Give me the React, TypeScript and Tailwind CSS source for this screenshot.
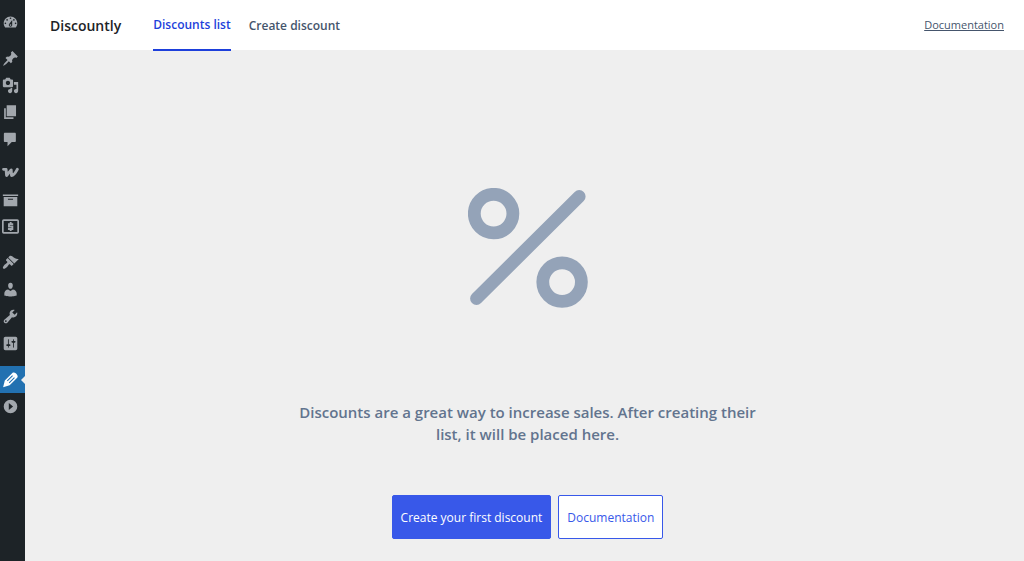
import type { ReactNode } from "react";
import clsx from "clsx";

type MenuItem = { label: string; icon: ReactNode; active?: boolean };

const menu: MenuItem[][] = [
  [
    {
      label: "Dashboard",
      icon: <path d="M3.76 16h12.48c1.1-1.37 1.76-3.11 1.76-5 0-4.42-3.58-8-8-8s-8 3.58-8 8c0 1.89.66 3.63 1.76 5zM10 4c.55 0 1 .45 1 1s-.45 1-1 1-1-.45-1-1 .45-1 1-1zM6 6c.55 0 1 .45 1 1s-.45 1-1 1-1-.45-1-1 .45-1 1-1zm8 0c.55 0 1 .45 1 1s-.45 1-1 1-1-.45-1-1 .45-1 1-1zm-5.37 5.55L12 7v6c0 1.1-.9 2-2 2s-2-.9-2-2c0-.57.24-1.08.63-1.45zM4 10c.55 0 1 .45 1 1s-.45 1-1 1-1-.45-1-1 .45-1 1-1zm12 0c.55 0 1 .45 1 1s-.45 1-1 1-1-.45-1-1 .45-1 1-1zm-5 3c0-.55-.45-1-1-1s-1 .45-1 1 .45 1 1 1 1-.45 1-1z" />,
    },
  ],
  [
    {
      label: "Posts",
      icon: <path d="M10.44 3.02l1.82-1.82 6.36 6.35-1.83 1.82c-1.05-.68-2.48-.57-3.41.36l-.75.75c-.92.93-1.04 2.35-.35 3.41l-1.83 1.82-2.41-2.41-2.8 2.79c-.42.42-3.38 2.71-3.8 2.29s1.86-3.39 2.28-3.81l2.79-2.79L4.1 9.36l1.83-1.82c1.05.69 2.48.57 3.4-.36l.75-.75c.93-.92 1.05-2.35.36-3.41z" />,
    },
    {
      label: "Media",
      icon: <path d="M13 11V4c0-.55-.45-1-1-1h-1.67L9 1H5L3.67 3H2c-.55 0-1 .45-1 1v7c0 .55.45 1 1 1h10c.55 0 1-.45 1-1zM7 4.5c1.38 0 2.5 1.12 2.5 2.5S8.38 9.5 7 9.5 4.5 8.38 4.5 7 5.62 4.5 7 4.5zM14 6h5v10.5c0 1.38-1.12 2.5-2.5 2.5S14 17.88 14 16.5s1.12-2.5 2.5-2.5c.17 0 .34.02.5.05V9h-3V6zm-4 8.05V13h2v3.5c0 1.38-1.12 2.5-2.5 2.5S7 17.88 7 16.5 8.12 14 9.5 14c.17 0 .34.02.5.05z" />,
    },
    { label: "Pages", icon: <path d="M5.500 14.500V1.500h11v13h-11zm-1 1h9v2h-11V5h2v10.500z" /> },
    {
      label: "Comments",
      icon: <path d="M3.500 2h11.500c.8 0 1.300.5 1.300 1.300v8.400c0 .8-.5 1.300-1.300 1.300h-3.500l-5 5v-5h-3c-.8 0-1.300-.5-1.300-1.300V3.300C2.200 2.500 2.700 2 3.500 2z" />,
    },
  ],
  [
    {
      label: "WooCommerce",
      icon: (
        <path
          d="M1.800 6.300h3l.6 7.200L10.800 7l.4 6.500c3.200-.2 5-3.700 6.800-7.200"
          fill="none"
          stroke="currentColor"
          strokeWidth="3.400"
          strokeLinecap="round"
          strokeLinejoin="round"
        />
      ),
    },
    { label: "Products", icon: <path d="M19 4v2H1V4h18zM2 7h16v11H2V7zm11 3.200V9H7v1.200h6z" /> },
    {
      label: "Payments",
      icon: (
        <g fill="none" stroke="currentColor">
          <rect x="1" y="2.500" width="18" height="15" rx="1" strokeWidth="2" />
          <path d="M13.200 7.200H8.200v2.800h4v3H7M10.200 4.800v2.400M10.200 12.900v2.300" strokeWidth="2.200" />
        </g>
      ),
    },
  ],
  [
    {
      label: "Appearance",
      icon: <path d="M14.48 11.06L7.41 3.99l1.5-1.5c.5-.56 2.3-.47 3.51.32 1.21.8 1.43 1.28 2.91 2.1 1.18.64 2.45 1.26 4.45.85zm-.71.71L6.7 4.7 4.93 6.47c-.39.39-.39 1.02 0 1.41l1.06 1.06c.39.39.39 1.03 0 1.42-.6.6-1.43 1.11-2.21 1.69-.35.26-.7.53-1.01.84C1.43 14.23.4 16.08 1.4 17.07c.99 1 2.84-.03 4.18-1.36.31-.31.58-.66.85-1.02.57-.78 1.08-1.61 1.69-2.21.39-.39 1.02-.39 1.41 0l1.06 1.06c.39.39 1.02.39 1.41 0z" />,
    },
    {
      label: "Users",
      icon: <path d="M10 9.25c-2.27 0-2.73-3.44-2.73-3.44C7 4.02 7.82 2 9.97 2c2.16 0 2.98 2.02 2.71 3.81 0 0-.41 3.44-2.68 3.44zm0 2.57L12.72 10c2.39 0 4.52 2.33 4.52 4.53v2.49s-3.65 1.13-7.24 1.13c-3.65 0-7.24-1.13-7.24-1.13v-2.49c0-2.25 1.94-4.48 4.47-4.48z" />,
    },
    {
      label: "Tools",
      icon: <path d="M16.68 9.77c-1.34 1.34-3.3 1.67-4.95.99l-5.41 6.52c-.99.99-2.59.99-3.58 0s-.99-2.59 0-3.57l6.52-5.42c-.68-1.65-.35-3.61.99-4.95 1.28-1.28 3.12-1.62 4.72-1.06l-2.89 2.89 2.82 2.82 2.86-2.87c.53 1.58.18 3.39-1.08 4.65zM3.81 16.21c.4.39 1.04.39 1.43 0 .4-.4.4-1.04 0-1.43-.39-.4-1.03-.4-1.43 0-.39.39-.39 1.03 0 1.43z" />,
    },
    {
      label: "Settings",
      icon: <path d="M18 16V4c0-1.1-.9-2-2-2H4c-1.1 0-2 .9-2 2v12c0 1.1.9 2 2 2h12c1.1 0 2-.9 2-2zM8 11h1c.55 0 1 .45 1 1s-.45 1-1 1H8v1.5c0 .28-.22.5-.5.5s-.5-.22-.5-.5V13H6c-.55 0-1-.45-1-1s.45-1 1-1h1V5.5c0-.28.22-.5.5-.5s.5.22.5.5V11zm5-2h-1c-.55 0-1-.45-1-1s.45-1 1-1h1V5.5c0-.28.22-.5.5-.5s.5.22.5.5V7h1c.55 0 1 .45 1 1s-.45 1-1 1h-1v5.5c0 .28-.22.5-.5.5s-.5-.22-.5-.5V9z" />,
    },
  ],
  [
    {
      label: "Discountly",
      active: true,
      icon: (
        <path
          fillRule="evenodd"
          d="M12.200 2.300c.9-.9 3-.7 4.300.6l.8.8c1.300 1.300 1.500 3.300.6 4.200L9 16.800 1.300 19l2-7.800zM12 5.100L5.800 11.300l.9.9 6.200-6.200zM14.200 7.300L8 13.500l.9.9 6.200-6.200z"
        />
      ),
    },
    {
      label: "Collapse menu",
      icon: <path fillRule="evenodd" d="M10 2a8 8 0 1 1 0 16 8 8 0 0 1 0-16zM8 6v8l5-4z" />,
    },
  ],
];

const gaps = ["mt-[9px]", "mt-[9px]", "mt-[6px]", "mt-[9px]", "mt-[9px]"];

function Sidebar() {
  return (
    <nav aria-label="Admin menu" className="w-[25px] shrink-0 bg-[#1d2327] text-[#a2a7ad]">
      {menu.map((group, i) => (
        <ul key={i} className={gaps[i]}>
          {group.map((item) => (
            <li key={item.label}>
              <a
                href="#"
                aria-label={item.label}
                className={clsx("relative flex h-[27px] items-center pl-[2px]", item.active && "bg-[#2271b1] text-white")}
              >
                <svg viewBox="0 0 20 20" className="size-[17px]" fill="currentColor" aria-hidden="true">
                  {item.icon}
                </svg>
                {item.active && (
                  <span className="absolute right-0 border-y-4 border-r-4 border-y-transparent border-r-[#efefef]" />
                )}
              </a>
            </li>
          ))}
        </ul>
      ))}
    </nav>
  );
}

function Header() {
  return (
    <header className="flex h-[51px] items-stretch border-b border-[#efefef] bg-white pr-5 pl-[25px]">
      <h1 className="mr-8 flex items-center text-[14px] font-semibold text-[#1d2327]">Discountly</h1>
      <nav className="-mb-px flex gap-[18px] text-[12px] font-semibold">
        <a href="#" className="flex items-center border-b-2 border-[#1d3fdb] text-[#1d3fdb]">
          Discounts list
        </a>
        <a href="#" className="flex items-center text-slate-600">
          Create discount
        </a>
      </nav>
      <a href="#" className="ml-auto flex items-center text-[11px] text-slate-600 underline">
        Documentation
      </a>
    </header>
  );
}

function EmptyState() {
  return (
    <main className="flex flex-col items-center pt-[137px] pl-[6px] text-center">
      <svg viewBox="0 0 120 120" className="size-[120px] text-[#94a3b8]" fill="none" stroke="currentColor" aria-hidden="true">
        <circle cx="25.600" cy="25.600" r="19.300" strokeWidth="12.800" />
        <circle cx="94.100" cy="94.100" r="19.300" strokeWidth="12.800" />
        <path d="M8.500 110.500L111.200 8.500" strokeWidth="12.800" strokeLinecap="round" />
      </svg>
      <p className="mt-[93px] max-w-[470px] text-[15px] leading-[22px] font-semibold text-slate-500">
        Discounts are a great way to increase sales. After creating their list, it will be placed here.
      </p>
      <div className="mt-[50px] flex gap-[7px] text-[12px]">
        <button type="button" className="h-11 rounded-xs border border-[#3858e9] bg-[#3858e9] px-2 pt-[2px] text-white">
          Create your first discount
        </button>
        <button type="button" className="h-11 rounded-xs border border-[#3858e9] bg-white px-2 pt-[2px] text-[#3858e9]">
          Documentation
        </button>
      </div>
    </main>
  );
}

export default function App() {
  return (
    <div className="flex min-h-screen bg-[#efefef] font-['Open_Sans',sans-serif]">
      <Sidebar />
      <div className="min-w-0 flex-1">
        <Header />
        <EmptyState />
      </div>
    </div>
  );
}
